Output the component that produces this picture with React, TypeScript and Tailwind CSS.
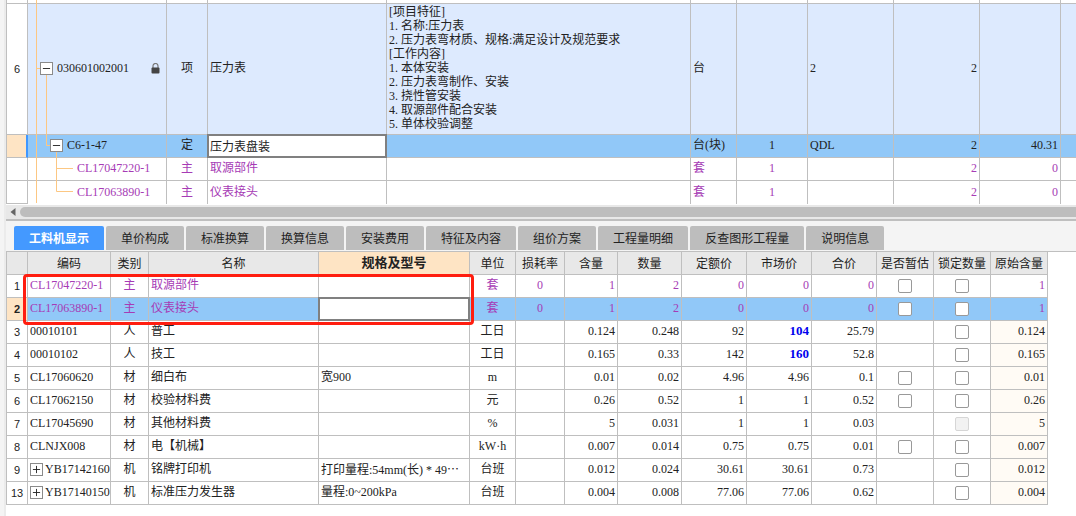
import { clsx } from 'clsx';
import { Minus, Plus } from 'lucide-react';
import type { ReactNode } from 'react';

interface Resource {
  no: number;
  code: string;
  kind: string;
  name: string;
  spec?: string;
  specCut?: boolean;
  unit: string;
  loss?: string;
  content: string;
  amount: string;
  quota: string;
  market: string;
  total: string;
  estimate?: boolean;
  lockDisabled?: boolean;
  group?: boolean;
  edited?: boolean;
  main?: boolean;
  selected?: boolean;
}

const tabs = [
  '工料机显示',
  '单价构成',
  '标准换算',
  '换算信息',
  '安装费用',
  '特征及内容',
  '组价方案',
  '工程量明细',
  '反查图形工程量',
  '说明信息',
];

const features = [
  '[项目特征]',
  '1. 名称:压力表',
  '2. 压力表弯材质、规格:满足设计及规范要求',
  '[工作内容]',
  '1. 本体安装',
  '2. 压力表弯制作、安装',
  '3. 挠性管安装',
  '4. 取源部件配合安装',
  '5. 单体校验调整',
];

const materials = [
  { code: 'CL17047220-1', name: '取源部件' },
  { code: 'CL17063890-1', name: '仪表接头' },
];

const resources: Resource[] = [
  { no: 1, code: 'CL17047220-1', kind: '主', name: '取源部件', unit: '套', loss: '0', content: '1', amount: '2', quota: '0', market: '0', total: '0', estimate: true, main: true },
  { no: 2, code: 'CL17063890-1', kind: '主', name: '仪表接头', unit: '套', loss: '0', content: '1', amount: '2', quota: '0', market: '0', total: '0', estimate: true, main: true, selected: true },
  { no: 3, code: '00010101', kind: '人', name: '普工', unit: '工日', content: '0.124', amount: '0.248', quota: '92', market: '104', total: '25.79', edited: true },
  { no: 4, code: '00010102', kind: '人', name: '技工', unit: '工日', content: '0.165', amount: '0.33', quota: '142', market: '160', total: '52.8', edited: true },
  { no: 5, code: 'CL17060620', kind: '材', name: '细白布', spec: '宽900', unit: 'm', content: '0.01', amount: '0.02', quota: '4.96', market: '4.96', total: '0.1', estimate: true },
  { no: 6, code: 'CL17062150', kind: '材', name: '校验材料费', unit: '元', content: '0.26', amount: '0.52', quota: '1', market: '1', total: '0.52', estimate: true },
  { no: 7, code: 'CL17045690', kind: '材', name: '其他材料费', unit: '%', content: '5', amount: '0.031', quota: '1', market: '1', total: '0.03', lockDisabled: true },
  { no: 8, code: 'CLNJX008', kind: '材', name: '电【机械】', unit: 'kW·h', content: '0.007', amount: '0.014', quota: '0.75', market: '0.75', total: '0.01', estimate: true },
  { no: 9, code: 'YB17142160', kind: '机', name: '铭牌打印机', spec: '打印量程:54mm(长) * 49', specCut: true, unit: '台班', content: '0.012', amount: '0.024', quota: '30.61', market: '30.61', total: '0.73', group: true },
  { no: 13, code: 'YB17140150', kind: '机', name: '标准压力发生器', spec: '量程:0~200kPa', unit: '台班', content: '0.004', amount: '0.008', quota: '77.06', market: '77.06', total: '0.62', group: true },
];

const headers = ['编码', '类别', '名称', '规格及型号', '单位', '损耗率', '含量', '数量', '定额价', '市场价', '合价', '是否暂估', '锁定数量', '原始含量'];

const line = 'border-[#bfbfbf]';

function Cell({ className, children }: { className?: string; children?: ReactNode }) {
  return <td className={clsx('border-r border-b px-0.5 pb-0.5 whitespace-nowrap', line, className)}>{children}</td>;
}

function CheckCell({ children }: { children?: ReactNode }) {
  return <td className={clsx('border-r border-b p-0', line)}>{children}</td>;
}

function RowNumber({ className, children }: { className?: string; children?: ReactNode }) {
  return (
    <th
      scope="row"
      className={clsx(
        'border-r border-b p-0 text-center font-["Liberation_Sans",sans-serif] text-[11px]',
        line,
        className,
      )}
    >
      {children}
    </th>
  );
}

function Toggle({ open, label }: { open?: boolean; label: string }) {
  const Icon = open ? Minus : Plus;
  return (
    <button
      type="button"
      aria-label={label}
      aria-expanded={!!open}
      className="relative z-10 flex size-[13px] shrink-0 items-center justify-center border border-[#8a8a8a] bg-white text-[#222]"
    >
      <Icon size={11} strokeWidth={2} className="shrink-0" />
    </button>
  );
}

function Check({ label, disabled }: { label: string; disabled?: boolean }) {
  return (
    <input
      type="checkbox"
      aria-label={label}
      disabled={disabled}
      className="mx-auto block size-3.5 appearance-none rounded-xs border border-[#999] bg-white disabled:border-[#d6d6d6] disabled:bg-[#f2f2f2]"
    />
  );
}

function CellInput({ label, value }: { label: string; value?: string }) {
  return (
    <input
      type="text"
      aria-label={label}
      defaultValue={value}
      className="absolute -top-px -left-px h-6 w-[calc(100%+2px)] border-2 border-[#808080] bg-white px-px"
    />
  );
}

function LockIcon() {
  return (
    <svg width="9" height="11" viewBox="0 0 9 11" aria-hidden="true">
      <path d="M2 5V3a2.5 2.5 0 0 1 5 0v2" fill="none" stroke="#777" strokeWidth="1.2" />
      <rect x="0.5" y="4.5" width="8" height="6" rx="1" fill="#444" />
    </svg>
  );
}

// Connectors between the parent and child rows of the item list.
function TreeLines() {
  return (
    <svg
      className="pointer-events-none absolute top-0 left-[22px]"
      width="60"
      height="203"
      viewBox="0 0 60 203"
      fill="none"
      stroke="#fcc783"
      aria-hidden="true"
    >
      <path d="M7.5 0V203M7 68.5H12M17.5 75V145.5H22M27.5 152V191.5H44M27 168.5H44" />
    </svg>
  );
}

function ItemList() {
  return (
    <div className={clsx('relative overflow-hidden border-l', line)}>
      <table className="w-full min-w-[900px] table-fixed border-separate border-spacing-0">
        <colgroup>
          <col className="w-[21px]" />
          <col className="w-[139px]" />
          <col className="w-[41px]" />
          <col className="w-[179px]" />
          <col />
          <col className="w-[46px]" />
          <col className="w-[71px]" />
          <col className="w-[86px]" />
          <col className="w-[86px]" />
          <col className="w-[81px]" />
          <col className="w-[15px]" />
        </colgroup>
        <tbody>
          <tr className="h-1">
            {Array.from({ length: 11 }, (_, i) => (
              <td key={i} className={clsx('border-b p-0', i !== 10 && 'border-r', line)} />
            ))}
          </tr>
          <tr className="h-[131px] bg-[#ddeafe]">
            <RowNumber className="bg-white font-normal">6</RowNumber>
            <Cell>
              <div className="flex items-center gap-1 pl-2.5">
                <Toggle open label="030601002001" />
                <span>030601002001</span>
                <span className="mr-1 ml-auto">
                  <LockIcon />
                </span>
              </div>
            </Cell>
            <Cell className="text-center">项</Cell>
            <Cell>压力表</Cell>
            <Cell className="leading-[14px]">
              {features.map((f) => (
                <p key={f}>{f}</p>
              ))}
            </Cell>
            <Cell>台</Cell>
            <Cell />
            <Cell>2</Cell>
            <Cell className="text-right">2</Cell>
            <Cell />
            <Cell className="border-r-0" />
          </tr>
          <tr className="h-[23px] bg-[#91c8f8]">
            <RowNumber className="border-r-2 border-r-[#3f97ff] bg-[#fee4c4]" />
            <Cell>
              <div className="flex items-center gap-1 pl-5">
                <Toggle open label="C6-1-47" />
                <span>C6-1-47</span>
              </div>
            </Cell>
            <Cell className="text-center">定</Cell>
            <Cell className="relative">
              <CellInput label="名称" value="压力表盘装" />
            </Cell>
            <Cell />
            <Cell>台(块)</Cell>
            <Cell className="text-center">1</Cell>
            <Cell>QDL</Cell>
            <Cell className="text-right">2</Cell>
            <Cell className="text-right">40.31</Cell>
            <Cell className="border-r-0" />
          </tr>
          {materials.map((m, i) => {
            const edge = i === materials.length - 1 ? 'border-b-0' : '';
            return (
              <tr key={m.code} className="h-[23px] text-[#a63bb5]">
                <RowNumber />
                <Cell className={clsx('pl-[49px]', edge)}>{m.code}</Cell>
                <Cell className={clsx('text-center', edge)}>主</Cell>
                <Cell className={edge}>{m.name}</Cell>
                <Cell className={edge} />
                <Cell className={edge}>套</Cell>
                <Cell className={clsx('text-center', edge)}>1</Cell>
                <Cell className={edge} />
                <Cell className={clsx('text-right', edge)}>2</Cell>
                <Cell className={clsx('text-right', edge)}>0</Cell>
                <Cell className={clsx('border-r-0', edge)} />
              </tr>
            );
          })}
        </tbody>
      </table>
      <TreeLines />
    </div>
  );
}

function ScrollBar() {
  return (
    <div className="flex h-3.5 items-center bg-[#e8e8e8] pl-1">
      <button type="button" aria-label="向左滚动" className="flex w-2.5 items-center">
        <svg width="6" height="8" viewBox="0 0 6 8" aria-hidden="true">
          <path d="M5.5 0V8L0.5 4Z" fill="#666" />
        </svg>
      </button>
      <div className="h-2.5 flex-1 rounded-l-full bg-[#bdbdbd]" />
    </div>
  );
}

function TabBar() {
  return (
    <div role="tablist" className={clsx('flex gap-0.5 border-t-2 border-b bg-[#f4f4f4] pt-[5px] pb-px pl-2 font-["Noto_Sans_CJK_SC",sans-serif]', line)}>
      {tabs.map((tab, i) => (
        <button
          key={tab}
          type="button"
          role="tab"
          aria-selected={i === 0}
          className={clsx(
            'h-6 rounded-t-xs px-[15px] leading-6 whitespace-nowrap',
            i === 0 ? 'bg-[#4499ff] font-bold text-white' : 'bg-[#bdbdbd]',
          )}
        >
          {tab}
        </button>
      ))}
    </div>
  );
}

function ResourceRow({ row }: { row: Resource }) {
  return (
    <tr className={clsx('h-[23px]', row.main && 'text-[#a63bb5]', row.selected && 'bg-[#91c8f8]')}>
      <RowNumber className={clsx('text-[#222]', row.selected ? 'bg-[#fee4c4] font-bold' : 'bg-white font-normal')}>
        {row.no}
      </RowNumber>
      <Cell>
        {row.group ? (
          <div className="flex items-center gap-0.5">
            <Toggle label={row.code} />
            <span>{row.code}</span>
          </div>
        ) : (
          row.code
        )}
      </Cell>
      <Cell className="text-center">{row.kind}</Cell>
      <Cell>{row.name}</Cell>
      <Cell className={clsx(row.selected && 'relative')}>
        {row.selected ? <CellInput label="规格及型号" /> : row.spec}
        {row.specCut && (
          <span lang="zh-CN" className='font-["Noto_Sans_CJK_SC",sans-serif]'>
            ⋯
          </span>
        )}
      </Cell>
      <Cell className="text-center">{row.unit}</Cell>
      <Cell className="text-center">{row.loss}</Cell>
      <Cell className="text-right">{row.content}</Cell>
      <Cell className="text-right">{row.amount}</Cell>
      <Cell className="text-right">{row.quota}</Cell>
      <Cell className={clsx('text-right', row.edited && 'text-[13px] font-bold text-[#0000ee]')}>{row.market}</Cell>
      <Cell className="text-right">{row.total}</Cell>
      <CheckCell>{row.estimate && <Check label={`是否暂估 ${row.code}`} />}</CheckCell>
      <CheckCell>
        <Check label={`锁定数量 ${row.code}`} disabled={row.lockDisabled} />
      </CheckCell>
      <Cell className={clsx('text-right', !row.main && 'bg-[#fffbf5]')}>{row.content}</Cell>
    </tr>
  );
}

function ResourceTable() {
  return (
    <div className="pr-7">
      <div className={clsx('relative border-l', line)}>
        <table className="w-full min-w-[960px] table-fixed border-separate border-spacing-0">
          <colgroup>
            <col className="w-[21px]" />
            <col className="w-[83px]" />
            <col className="w-[38px]" />
            <col />
            <col className="w-[151px]" />
            <col className="w-[46px]" />
            <col className="w-[49px]" />
            <col className="w-[53px]" />
            <col className="w-[64px]" />
            <col className="w-[65px]" />
            <col className="w-[65px]" />
            <col className="w-[65px]" />
            <col className="w-[57px]" />
            <col className="w-[57px]" />
            <col className="w-[57px]" />
          </colgroup>
          <thead>
            <tr className="h-[23px] bg-[#e8e8e8]">
              <td className={clsx('border-r border-b', line)} />
              {headers.map((h) => (
                <th
                  key={h}
                  scope="col"
                  className={clsx(
                    'border-r border-b p-0 whitespace-nowrap',
                    line,
                    h === '规格及型号' ? 'border-b-[#4b8fdc] bg-[#fee4c4] text-[13px] font-bold' : 'pt-0.5 font-normal',
                  )}
                >
                  {h}
                </th>
              ))}
            </tr>
          </thead>
          <tbody>
            {resources.map((row) => (
              <ResourceRow key={row.no} row={row} />
            ))}
          </tbody>
        </table>
        {/* highlight frame around the two main materials */}
        <div className="pointer-events-none absolute top-[22px] right-[574px] left-4 z-20 h-[51px] rounded-sm border-3 border-[#ff1d0f]" />
      </div>
    </div>
  );
}

export default function App() {
  return (
    <div className='flex min-h-screen overflow-hidden bg-white font-["Liberation_Serif","Noto_Sans_CJK_SC",serif] text-[12px] leading-4 text-[#222]'>
      <div className="w-1.5 shrink-0 border-r-2 border-[#ebebeb] bg-[#f4f4f4]" />
      <main className="min-w-0 flex-1">
        <ItemList />
        <div className="pt-px">
          <ScrollBar />
        </div>
        <TabBar />
        <ResourceTable />
      </main>
    </div>
  );
}
